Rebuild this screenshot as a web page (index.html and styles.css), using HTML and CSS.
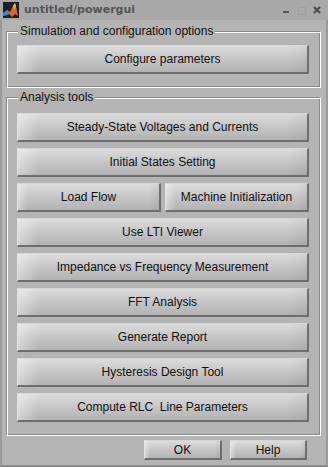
FILE: index.html
```html
<!DOCTYPE html>
<html lang="en">
<head>
    <meta charset="UTF-8">
    <title>untitled/powergui</title>
    <link rel="stylesheet" href="styles.css">
</head>
<body>
    <div class="window">
        <div class="title-bar">
            <svg class="app-icon" width="16" height="16" viewBox="0 0 16 16">
                <rect width="16" height="16" fill="#18202b"/>
                <path d="M0 11 L4 8 L7 10 L5 13 L0 14 Z" fill="#2a8fd0"/>
                <path d="M4 8 L7 10 L10 4 L12 1 L13 4 L15 14 L12 12 L9 15 L6 12 Z" fill="#e5631c"/>
                <path d="M10 4 L12 1 L13 4 L11 8 Z" fill="#f6b23c"/>
            </svg>
            <span class="title">untitled/powergui</span>
            <svg class="controls" width="40" height="20" viewBox="0 0 40 20">
                <rect x="0" y="11" width="6" height="2" fill="#555"/>
                <rect x="15.5" y="7.5" width="7" height="7" fill="none" stroke="#a0a0a0"/>
                <path d="M31 7 L37 13 M37 7 L31 13" stroke="#4a4a4a" stroke-width="2"/>
            </svg>
        </div>
        <div class="client">
            <div class="panel">
                <div class="panel-label">Simulation and configuration options</div>
                <button class="btn">Configure parameters</button>
            </div>
            <div class="panel panel-tools">
                <div class="panel-label">Analysis tools</div>
                <div class="tool-list">
                    <button class="btn">Steady-State Voltages and Currents</button>
                    <button class="btn">Initial States Setting</button>
                    <div class="btn-pair">
                        <button class="btn">Load Flow</button>
                        <button class="btn">Machine Initialization</button>
                    </div>
                    <button class="btn">Use LTI Viewer</button>
                    <button class="btn">Impedance vs Frequency Measurement</button>
                    <button class="btn">FFT Analysis</button>
                    <button class="btn">Generate Report</button>
                    <button class="btn">Hysteresis Design Tool</button>
                    <button class="btn">Compute RLC&nbsp; Line Parameters</button>
                </div>
            </div>
            <div class="footer">
                <button class="btn btn-small btn-ok">OK</button>
                <button class="btn btn-small btn-help">Help</button>
            </div>
        </div>
    </div>
</body>
</html>
```

FILE: styles.css
```css
body {
    margin: 0;
    font-family: "Liberation Sans", Arial, sans-serif;
    font-size: 12px;
    color: #111111;
    background: #b4b4b4;
}

.window {
    width: 328px;
    height: 467px;
    display: flex;
    flex-direction: column;
    background: #b4b4b4;
    overflow: hidden;
}

.title-bar {
    height: 20px;
    display: flex;
    align-items: center;
    background: #a9a9a9;
}

.app-icon {
    margin-left: 3px;
    margin-top: -1px;
}

.title {
    margin-left: 5px;
    font-family: "DejaVu Sans", sans-serif;
    font-size: 11px;
    font-weight: bold;
    color: #555555;
    margin-top: -1px;
}

.controls {
    margin-left: auto;
    margin-right: 5px;
}

.client {
    flex: 1;
    padding-top: 11px;
    border-left: 2px solid #9a9a9a;
    border-right: 2px solid #9a9a9a;
    border-bottom: 2px solid #8c8c8c;
}

.panel {
    width: 315px;
    box-sizing: border-box;
    margin-left: 4px;
    padding: 0 11px 13px 10px;
    border: 1px solid;
    border-color: #8a8a8a #ffffff #ffffff #8a8a8a;
    box-shadow: inset 1px 1px 0 #ffffff, inset -1px -1px 0 #8a8a8a;
}

.panel-tools {
    margin-top: 9px;
}

.panel-label {
    width: fit-content;
    height: 14px;
    line-height: 14px;
    padding: 0 2px;
    margin: -8px 0 7px 1px;
    background: #b4b4b4;
}

.panel-tools .panel-label {
    margin-bottom: 9px;
}

.tool-list {
    display: flex;
    flex-direction: column;
    gap: 6px;
}

.btn-pair {
    display: grid;
    grid-template-columns: 1fr 1fr;
    gap: 4px;
}

.btn {
    display: block;
    width: 100%;
    height: 29px;
    padding: 0;
    font-family: "Liberation Sans", Arial, sans-serif;
    font-size: 12px;
    color: #111111;
    border-style: solid;
    border-width: 1px 2px 2px 1px;
    border-color: #d6d6d6 #6e6e6e #6e6e6e #e4e4e4;
    background:
        linear-gradient(to right, rgba(255, 255, 255, 0.4), rgba(255, 255, 255, 0) 7%, rgba(255, 255, 255, 0) 93%, rgba(0, 0, 0, 0.05)),
        linear-gradient(to bottom, #dcdcdc, #c8c8c8 45%, #b2b2b2);
    box-sizing: border-box;
}

.footer {
    display: flex;
    justify-content: flex-end;
    gap: 8px;
    margin-top: 4px;
    padding-right: 19px;
}

.btn-small {
    height: 20px;
}

.btn-ok {
    width: 78px;
}

.btn-help {
    width: 77px;
}
```
